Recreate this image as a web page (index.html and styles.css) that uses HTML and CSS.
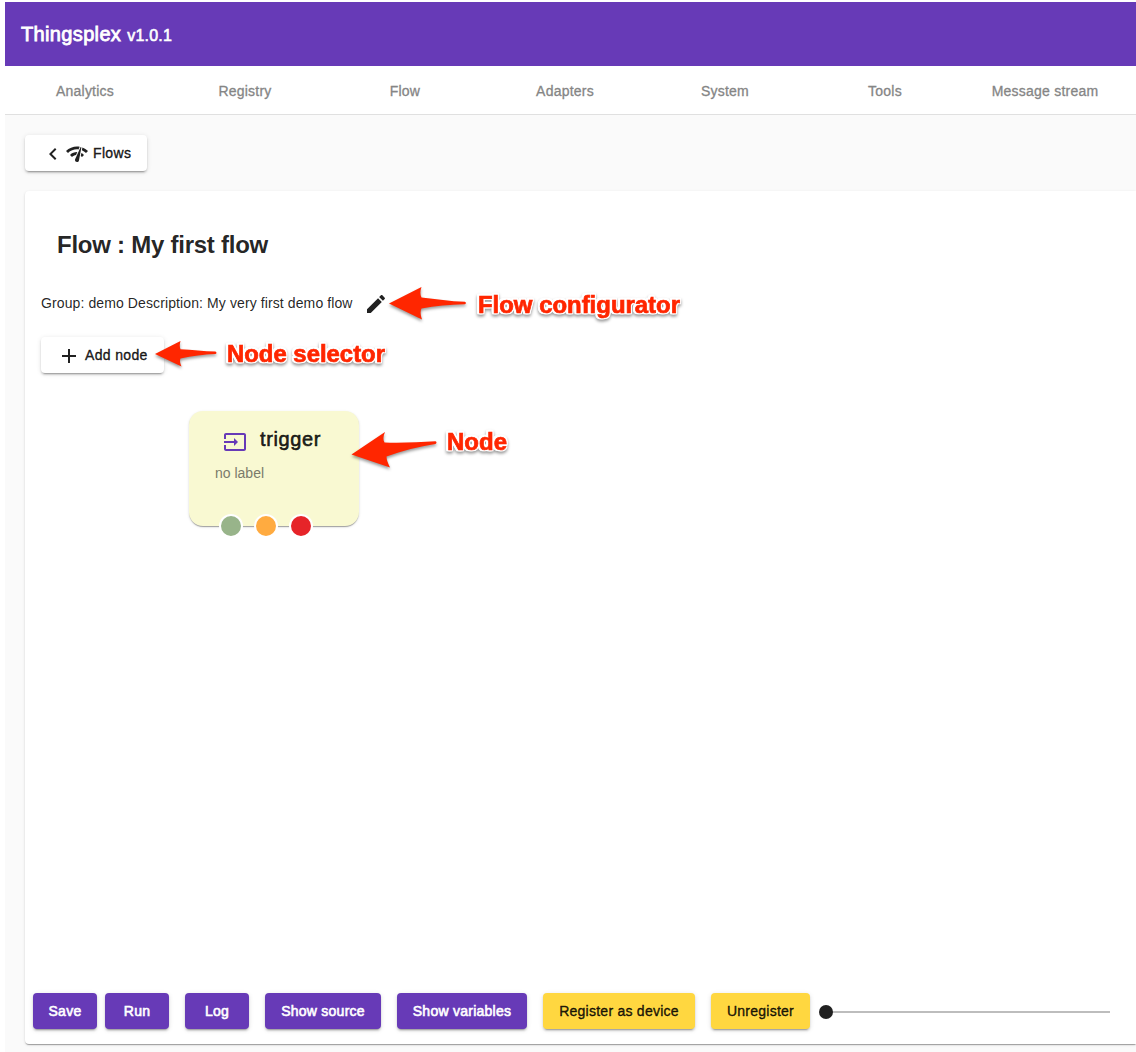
FILE: index.html
```html
<!DOCTYPE html>
<html lang="en">
<head>
<meta charset="utf-8">
<title>Thingsplex</title>
<link rel="stylesheet" href="styles.css">
</head>
<body>
<div class="app">
  <header class="toolbar"><span class="brand">Thingsplex</span><span class="version">v1.0.1</span></header>
  <nav class="tabs">
    <a class="tab">Analytics</a><a class="tab">Registry</a><a class="tab">Flow</a><a class="tab">Adapters</a><a class="tab">System</a><a class="tab">Tools</a><a class="tab">Message stream</a>
  </nav>
  <main class="content">
    <button class="btn back">
      <svg class="icon" viewBox="0 0 24 24"><path d="M15.41 16.59L10.83 12l4.58-4.59L14 6l-6 6 6 6z"/></svg>
      <svg class="icon" viewBox="0 0 24 24"><path d="M15.9 5c-.17 0-.32.09-.41.23l-.07.15-5.18 11.65c-.16.29-.26.61-.26.96 0 1.11.9 2.01 2.01 2.01.96 0 1.77-.68 1.96-1.59l.01-.03L16.4 5.5c0-.28-.22-.5-.5-.5zM1 9l2 2c2.88-2.88 6.79-4.08 10.53-3.62l1.19-2.68C9.89 3.84 4.74 5.27 1 9zm20 2l2-2c-1.64-1.64-3.55-2.82-5.59-3.57l-.53 2.82c1.5.62 2.9 1.53 4.12 2.75zm-4 4l2-2c-.8-.8-1.7-1.42-2.66-1.89l-.55 2.92c.42.27.83.59 1.21.97zM5 13l2 2c1.13-1.13 2.56-1.79 4.03-2l1.28-2.88c-2.63-.08-5.3.87-7.31 2.88z"/></svg>
      <span class="btn-label">Flows</span>
    </button>
    <section class="card">
      <h1 class="title">Flow : My first flow</h1>
      <div class="meta">
        <span class="meta-text">Group: demo Description: My very first demo flow</span>
        <svg class="icon" viewBox="0 0 24 24"><path d="M3 17.25V21h3.75L17.81 9.94l-3.75-3.75L3 17.25zM20.71 7.04c.39-.39.39-1.02 0-1.41l-2.34-2.34c-.39-.39-1.02-.39-1.41 0l-1.83 1.83 3.75 3.75 1.83-1.83z"/></svg>
      </div>
      <button class="btn add">
        <svg class="icon" viewBox="0 0 24 24"><path d="M19 13h-6v6h-2v-6H5v-2h6V5h2v6h6v2z"/></svg>
        <span class="btn-label">Add node</span>
      </button>
      <div class="canvas">
        <div class="node">
          <div class="node-head">
            <svg class="icon node-icon" viewBox="0 0 24 24"><path d="M21 3.01H3c-1.1 0-2 .9-2 2V9h2V4.99h18v14.03H3V15H1v4.01c0 1.1.9 1.98 2 1.98h18c1.1 0 2-.88 2-1.98v-14c0-1.11-.9-2-2-2zM11 16l4-4-4-4v3H1v2h10v3z"/></svg>
            <span class="node-name">trigger</span>
          </div>
          <div class="node-label">no label</div>
          <div class="ports"><i class="port ok"></i><i class="port warn"></i><i class="port err"></i></div>
        </div>
      </div>
      <footer class="actions">
        <button class="btn primary save">Save</button>
        <button class="btn primary run">Run</button>
        <button class="btn primary log">Log</button>
        <button class="btn primary source">Show source</button>
        <button class="btn primary variables">Show variables</button>
        <button class="btn accent register">Register as device</button>
        <button class="btn accent unregister">Unregister</button>
        <div class="slider"><i class="thumb"></i></div>
      </footer>
    </section>
  </main>
</div>
<svg class="notes" width="1136" height="1052" viewBox="0 0 1136 1052">
  <g class="arrows">
    <path d="M389 303.5L421.5 287C420 291 420 295 421.5 297.5C436 299 450 301.5 465 301.7Q467 303 465 304.2C450 304.5 435 306 421.5 308.5C420 311.5 420.5 315 422 319.5Z"/>
    <path d="M155 354L180.5 341C179.500 344.500 179.500 347 180.500 349.200C192 349.500 204 351.300 215.500 351.500Q217.500 352.800 215.500 354C204 354.500 192 356 180.500 358.500C179.500 360.500 180 363 181.500 366.500Z"/>
    <path d="M351.500 454.500L385 432C383 436.500 383 440 384.500 442.500C401 443.500 419 442 435.500 441.300Q437.500 442.500 435.500 443.900C419 446.500 402 450.500 386.500 456.500C386.500 460 388 463.500 390 467.500Z"/>
  </g>
  <g class="captions">
    <text x="478" y="313" textLength="202" lengthAdjust="spacingAndGlyphs">Flow configurator</text>
    <text x="227" y="362" textLength="158" lengthAdjust="spacingAndGlyphs">Node selector</text>
    <text x="447" y="450" textLength="60" lengthAdjust="spacingAndGlyphs">Node</text>
  </g>
</svg>
</body>
</html>
```

FILE: styles.css
```css
* { box-sizing: border-box; }
body {
  margin: 0;
  width: 1136px;
  height: 1052px;
  overflow: hidden;
  background: #fff;
  color: rgba(0, 0, 0, .87);
  font: 14px/20px "Liberation Sans", Arial, sans-serif;
}
.app { padding: 2px 0 0 5px; height: 1052px; display: flex; flex-direction: column; }
.toolbar {
  height: 64px;
  flex: none;
  padding-left: 16px;
  display: flex;
  align-items: baseline;
  gap: 6px;
  line-height: 64px;
  background: #673ab7;
  color: #fff;
  -webkit-text-stroke: .8px;
}
.brand { font-size: 20px; letter-spacing: .35px; }
.version { font-size: 16px; letter-spacing: .2px; -webkit-text-stroke: .6px; }
.tabs { height: 49px; flex: none; display: flex; border-bottom: 1px solid #e0e0e0; }
.tab {
  flex: 0 0 160px;
  line-height: 50px;
  text-align: center;
  color: #858585;
  letter-spacing: .22px;
  -webkit-text-stroke: .3px;
}
.content { flex: 1; background: #fafafa; padding: 20px 0 8px 20px; display: flex; flex-direction: column; gap: 20px; align-items: stretch; }
.icon { width: 24px; height: 24px; fill: currentColor; flex: none; display: block; }
.btn {
  height: 36px;
  border: 0;
  border-radius: 4px;
  padding: 0;
  display: flex;
  align-items: center;
  justify-content: center;
  flex: none;
  font: 14px/36px "Liberation Sans", Arial, sans-serif;
  letter-spacing: .25px;
  color: rgba(0, 0, 0, .87);
  background: #fff;
  white-space: nowrap;
  -webkit-text-stroke: .4px;
  box-shadow: 0 3px 1px -2px rgba(0,0,0,.2), 0 2px 2px 0 rgba(0,0,0,.14), 0 1px 5px 0 rgba(0,0,0,.12);
}
.back .icon, .add .icon { position: relative; top: 1px; }
.back { width: 122px; padding-left: 16px; justify-content: flex-start; }
.btn-label { margin-left: 4px; letter-spacing: .35px; }
.card {
  flex: 1;
  display: flex;
  flex-direction: column;
  background: #fff;
  border-radius: 4px 0 0 4px;
  box-shadow: 0 2px 1px -1px rgba(0,0,0,.2), 0 1px 1px 0 rgba(0,0,0,.14), 0 1px 3px 0 rgba(0,0,0,.12);
}
.title { margin: 38px 0 0 32px; font-size: 24px; line-height: 32px; font-weight: 700; letter-spacing: -.25px; }
.meta { margin: 31px 0 0 16px; height: 24px; display: flex; }
.meta-text { width: 323px; line-height: 22px; white-space: nowrap; letter-spacing: .105px; }
.add { margin: 21px 0 0 16px; width: 123px; padding-left: 16px; justify-content: flex-start; }
.canvas { flex: 1; padding: 38px 0 0 164px; }
.node {
  width: 170px;
  height: 115px;
  padding: 17px 0 0 26px;
  border-radius: 14px;
  background: #f9f9d2;
  position: relative;
  box-shadow: 0 2px 1px -1px rgba(0,0,0,.2), 0 1px 1px 0 rgba(0,0,0,.14), 0 1px 3px 0 rgba(0,0,0,.12);
}
.node-head { display: flex; height: 24px; padding-left: 8px; gap: 13px; }
.node-icon { color: #673ab7; margin-top: 2px; }
.node-name { font-size: 20px; line-height: 22px; letter-spacing: .6px; -webkit-text-stroke: .6px; }
.node-label { margin-top: 11px; color: #7b7b6b; }
.ports { position: absolute; left: 30px; top: 103px; display: flex; gap: 11px; }
.port { width: 24px; height: 24px; border: 2px solid #fff; border-radius: 50%; }
.ok { background: #98b48a; }
.warn { background: #ffab40; }
.err { background: #e62429; }
.actions { display: flex; align-items: center; padding: 0 0 15px 8px; }
.primary { background: #673ab7; color: #fff; -webkit-text-stroke: .6px; }
.accent { background: #ffd740; }
.save, .run, .log { width: 64px; }
.run { margin-left: 8px; }
.log, .source, .variables, .register, .unregister { margin-left: 16px; }
.source { width: 116px; }
.variables { width: 130px; }
.register { width: 152px; }
.unregister { width: 99px; }
.slider { width: 284px; height: 2px; margin: 2px 0 0 16px; background: #bdbdbd; position: relative; }
.thumb { position: absolute; left: -7px; top: -6px; width: 14px; height: 14px; border-radius: 50%; background: #212121; }
.notes { position: absolute; left: 0; top: 0; pointer-events: none; }
.arrows { fill: #ff2600; filter: drop-shadow(0 2px 1.5px rgba(0,0,0,.4)); }
.captions {
  font: 700 24px "Liberation Sans", Arial, sans-serif;
  fill: #ff2600;
  stroke: #ff2600;
  stroke-width: .7px;
  filter:
    drop-shadow(1.3px 0 0 #fff) drop-shadow(-1.3px 0 0 #fff)
    drop-shadow(0 1.3px 0 #fff) drop-shadow(0 -1.3px 0 #fff)
    drop-shadow(0 2px 1.5px rgba(0,0,0,.4));
}
```
